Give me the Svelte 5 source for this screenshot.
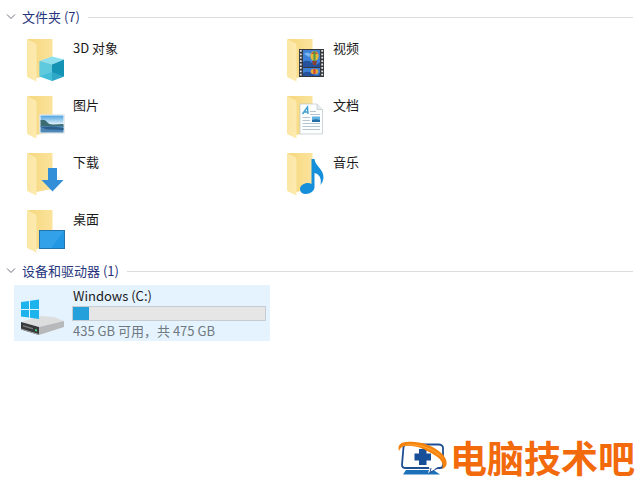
<script lang="ts">
  let foldersOpen = $state(true);
  let drivesOpen = $state(true);

  const folders = [
    { name: '3D 对象', icon: 'cube' },
    { name: '视频', icon: 'video' },
    { name: '图片', icon: 'picture' },
    { name: '文档', icon: 'document' },
    { name: '下载', icon: 'download' },
    { name: '音乐', icon: 'music' },
    { name: '桌面', icon: 'desktop' }
  ];

  const drives = [{ name: 'Windows (C:)', info: '435 GB 可用，共 475 GB', free: 435, total: 475 }];
</script>

{#snippet heading(title, count, open, toggle)}
  <h2>
    <button class="toggle" aria-expanded={open} onclick={toggle}>
      <svg class="chevron" class:closed={!open} width="10" height="8" viewBox="0 0 10 8">
        <path d="M1 1.5 5 5.5 9 1.5" fill="none" stroke="#6b6f78" stroke-width="1" />
      </svg>
      <span>{title} ({count})</span>
    </button>
  </h2>
{/snippet}

{#snippet folderIcon(kind)}
  <svg class="folder-icon" width="40" height="46" viewBox="0 0 40 46" aria-hidden="true">
    <path d="M1 2H25.500V38L9 41Z" fill="url(#folder-back)" />
    <path d="M0 2 8 6Q9.500 7 9.500 9V44.500L1 40.500Q0 40 0 38.500Z" fill="url(#folder-flap)" />
    {#if kind === 'cube'}
      <path d="M12.500 24 25 19.500 37 22.500 25 27.500Z" fill="#8fe0ef" />
      <path d="M12.500 24 25 27.500V44L12.500 39.500Z" fill="#45bfd8" />
      <path d="M25 27.500 37 22.500V39.500L25 44Z" fill="#1593b5" />
      <path d="M12.500 39.500 25 35V27.500L12.500 24Z" fill="#7fd6e6" opacity=".45" />
      <path d="M25 35 37 39.500 25 44Z" fill="#3fb6d2" opacity=".6" />
    {:else if kind === 'video'}
      <rect x="12" y="12" width="25" height="28" fill="#34373b" />
      <path d="M13.800 13V40M35.200 13V40" stroke="#e4e6e8" stroke-width="1.800" stroke-dasharray="1.800 1.600" />
      <rect x="16" y="13" width="17" height="17" fill="#3d80d6" />
      <path d="M16 25Q21 22 25 26T33 25V30H16Z" fill="#26519b" />
      <path d="M17 17Q20 14 24 17L22 20Z" fill="#79b5ef" />
      <ellipse cx="27.500" cy="19" rx="4.200" ry="5" fill="#e5b83a" />
      <path d="M24 17Q27.500 12 31 17Z" fill="#d64535" />
      <path d="M26.500 14H28.500V24H26.500Z" fill="#4d9a4a" />
      <path d="M25 24H30L29 28H26Z" fill="#8b4034" />
      <rect x="16" y="31" width="17" height="8" fill="#3d80d6" />
      <path d="M16 36Q21 33 26 37T33 35V39H16Z" fill="#26519b" />
      <ellipse cx="27.500" cy="34.500" rx="3.800" ry="2.800" fill="#e5a838" />
      <path d="M26.500 32H28.500V37H26.500Z" fill="#cf3f35" />
    {:else if kind === 'picture'}
      <rect x="12.500" y="20.500" width="25" height="19" fill="#fff" stroke="#d3d8dc" stroke-width=".5" />
      <rect x="13.500" y="21.500" width="23" height="17" fill="url(#photo-sky)" />
      <path d="M13.500 26Q18 25 20 28T27 30.500L36.500 30V33H13.500Z" fill="#3c6b72" />
      <path d="M13.500 32H36.500V38.500H13.500Z" fill="#4e86b5" />
      <path d="M13.500 33 26 32.500 36.500 34V36L20 35.500Z" fill="#2d5f8d" />
    {:else if kind === 'document'}
      <path d="M13 10H30L35.500 15.500V40H13Z" fill="#fdfefe" stroke="#bcc5ca" stroke-width=".7" />
      <path d="M30 10V15.500H35.500" fill="#e7ecee" stroke="#bcc5ca" stroke-width=".7" />
      <path d="M15.500 20 20.500 13 21 20M17.500 18H21" fill="none" stroke="#3c9ed0" stroke-width="1.400" />
      <path d="M23 17.500H29M23 20.500H33M15.500 23.500H23M15.500 26.500H23M15.500 29.500H33M15.500 32.500H33M15.500 35.500H33" stroke="#b5c6d0" stroke-width="1" />
      <rect x="25" y="22.500" width="8" height="5.500" fill="#65b5e4" />
      <path d="M25 26Q29 24.500 33 26V28H25Z" fill="#246fa8" />
    {:else if kind === 'download'}
      <path d="M21 17H30V29H36.500L25.500 40.500 14.500 29H21Z" fill="#338fd8" />
    {:else if kind === 'music'}
      <path d="M24.500 8H27.500C28 15 37 18 36.500 27Q36 31 33.500 34C35 27 32 23 27.500 22V36C27.500 40 23 43 19 43C15.500 43 13 41 13 38C13 34.500 17 32 21 32Q23 32 24.500 33Z" fill="#168fdb" />
    {:else if kind === 'desktop'}
      <rect x="12.500" y="22.500" width="25" height="18" fill="#2298e4" stroke="#2374ad" />
      <path d="M13 23H37L24 40H13Z" fill="#46adf0" opacity=".45" />
    {/if}
  </svg>
{/snippet}

<svg class="defs" width="0" height="0" aria-hidden="true">
  <defs>
    <linearGradient id="folder-back" x1="0" x2="1">
      <stop offset="0" stop-color="#f5d77d" />
      <stop offset="1" stop-color="#fbe39c" />
    </linearGradient>
    <linearGradient id="folder-flap" x1="0" x2="1">
      <stop offset="0" stop-color="#fbe6a3" />
      <stop offset="1" stop-color="#fdeab0" />
    </linearGradient>
    <linearGradient id="photo-sky" x2="0" y2="1">
      <stop offset="0" stop-color="#4ea3e0" />
      <stop offset=".5" stop-color="#dceef8" />
    </linearGradient>
  </defs>
</svg>

<div class="explorer">
  <main>
    <section>
      {@render heading('文件夹', folders.length, foldersOpen, () => (foldersOpen = !foldersOpen))}
      {#if foldersOpen}
        <div class="tiles">
          {#each folders as folder}
            <button class="tile">
              {@render folderIcon(folder.icon)}
              <span class="name">{folder.name}</span>
            </button>
          {/each}
        </div>
      {/if}
    </section>

    <section>
      {@render heading('设备和驱动器', drives.length, drivesOpen, () => (drivesOpen = !drivesOpen))}
      {#if drivesOpen}
        <div class="tiles">
          {#each drives as drive}
            <button class="tile drive selected">
              <svg class="drive-icon" width="44" height="38" viewBox="0 0 44 38" aria-hidden="true">
                <path d="M0 23 20 17 33 18 43 22 18 28Z" fill="#dcdddd" />
                <path d="M18 28 43 22V28L18 36Z" fill="#b6b8ba" />
                <path d="M0 23 18 28V36L0 30.500Z" fill="#36383a" />
                <path d="M0 29.500 18 35V36L0 30.500Z" fill="#a4a6a8" />
                <path d="M2 26 12 29V30.500L2 27.500Z" fill="#777a7c" />
                <path d="M14 30 16 30.500V32.500L14 32Z" fill="#43cf70" />
                <path d="M0 3 8 2V10H0ZM9 1.800 18 .5V10H9ZM0 11H8V18.500L0 17.500ZM9 11H18V20L9 18.700Z" fill="#1db4ee" />
              </svg>
              <span class="details">
                <span class="name">{drive.name}</span>
                <span class="bar">
                  <span class="used" style="width: {((drive.total - drive.free) / drive.total) * 100}%"></span>
                </span>
                <span class="info">{drive.info}</span>
              </span>
            </button>
          {/each}
        </div>
      {/if}
    </section>
  </main>

  <footer>
    <svg width="52" height="38" viewBox="0 0 52 38" aria-hidden="true">
      <path d="M9 6.500H41Q45 7 45 10V27Q45 30 42 30H8Q4 30 4 27L5.500 9Q6 6.500 9 6.500Z" fill="#fff" stroke="#1e4f93" stroke-width="1.800" />
      <path d="M21 11H28.500V15.500H33V22.500H28.500V27H21V22.500H16.500V15.500H21Z" fill="#174f98" />
      <path d="M8 32H31L30 35 34 33H37L42 36.500H5Z" fill="#1c70b8" />
      <path d="M31 29H40L32 34Z" fill="#fff" />
      <path d="M40 30 32 34.500 33 30" fill="none" stroke="#1e4f93" />
      <path d="M1 13C-1 7 3 4 9 4C21 3 34 7 42 14C50 20 51 29 44 31C47 23 39 18 31 14C23 9 14 7 8 8Q3 8 1 13Z" fill="#f5820b" />
      <path d="M4 8C16 3 39 10 46 22C37 11 19 5 4 8Z" fill="#ffa638" />
    </svg>
    <strong>电脑技术吧</strong>
  </footer>
</div>

<style>
  :global(body) {
    margin: 0;
    background: #fff;
  }

  .defs {
    position: absolute;
  }

  .explorer {
    display: flex;
    flex-direction: column;
    min-height: 100vh;
    box-sizing: border-box;
    padding: 8px 5px 12px 6px;
    color: #1a1a1a;
    font-family: 'Noto Sans CJK SC', sans-serif;
    font-size: 13px;
    line-height: 16px;
  }

  main {
    display: flex;
    flex-direction: column;
    gap: 4px;
    padding-right: 2px;
  }

  button {
    padding: 0;
    border: 0;
    background: none;
    color: inherit;
    font: inherit;
    text-align: left;
  }

  h2 {
    display: flex;
    align-items: center;
    gap: 8px;
    margin: 0;
    color: #26357c;
    font-size: 13px;
    font-weight: 400;
    line-height: 18px;
  }

  h2::after {
    content: '';
    flex: 1;
    height: 1px;
    background: #dcdcdc;
  }

  .toggle {
    display: flex;
    align-items: center;
    gap: 6px;
  }

  .closed {
    transform: rotate(-90deg);
  }

  .tiles {
    display: grid;
    grid-template-columns: repeat(auto-fill, 256px);
    gap: 1px 4px;
    padding: 5px 0 0 8px;
  }

  .tile {
    display: flex;
    align-items: flex-start;
    gap: 6px;
    height: 56px;
    box-sizing: border-box;
    padding: 6px 4px 0 13px;
  }

  .tile .name {
    padding-top: 3px;
  }

  .drive {
    gap: 7px;
    padding: 3px 4px 0 7px;
  }

  .selected {
    background: #e5f3ff;
  }

  .drive-icon {
    margin-top: 11px;
  }

  .details {
    display: flex;
    flex: 1;
    flex-direction: column;
  }

  .drive .name {
    padding: 0 0 2px 1px;
  }

  .bar {
    height: 13px;
    border: 1px solid #c6ccd2;
    background: #e6e6e6;
  }

  .used {
    display: block;
    height: 100%;
    background: #26a0da;
  }

  .info {
    padding: 2px 0 0 1px;
    color: #6f7980;
  }

  footer {
    display: flex;
    align-items: center;
    justify-content: flex-end;
    margin-top: auto;
  }

  strong {
    color: #f26a0c;
    font-size: 37px;
    font-weight: 700;
    line-height: 40px;
  }
</style>
